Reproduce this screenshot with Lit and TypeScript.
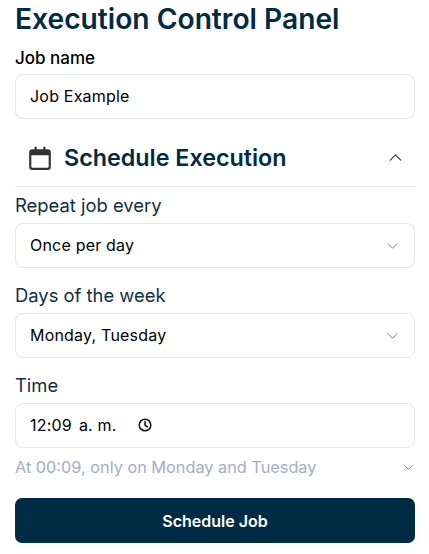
import { LitElement, html, css } from "lit";
import { customElement } from "lit/decorators.js";

const chevron = (cls: string) => html`<svg class=${cls} viewBox="0 0 14 8" fill="none"><path d="M1 1l6 6 6-6" stroke="currentColor" stroke-width="1.2" stroke-linecap="round" stroke-linejoin="round"/></svg>`;

@customElement("app-root")
export class AppRoot extends LitElement {
  static styles = css`
    :host { display: block; width: 429px; height: 554px; background: #fff; overflow: hidden; font-family: Inter, "Open Sans", sans-serif; color: #000; }
    .page { display: flex; flex-direction: column; padding: 0 14px 0 15px; }
    h1 { margin: 0; height: 38px; line-height: 38px; font-size: 28.2px; font-weight: 600; color: #012b44; white-space: nowrap; }
    .job-label { margin-top: 10px; height: 20px; line-height: 20px; font-size: 17px; font-weight: 500; }
    .field { box-sizing: border-box; height: 45px; margin-top: 4px; border: 1px solid #e5e7eb; border-radius: 8px; display: flex; align-items: center; padding: 0 14px 2px; font-size: 16px; letter-spacing: 0.2px; background: #fff; }
    .field.first { margin-top: 6px; }
    .select { justify-content: space-between; padding-right: 16px; }
    .chev { width: 11px; height: 6px; color: #707070; display: block; margin-top: 3px; }
    .section { box-sizing: border-box; height: 69px; margin-top: -1px; display: flex; align-items: center; padding: 11px 13px 0 12px; border-bottom: 1px solid #e2e8f0; }
    .cal { width: 26px; height: 26px; display: block; flex: none; }
    h2 { margin: 0 0 0 11px; flex: 1; font-size: 23.3px; font-weight: 600; color: #012b44; white-space: nowrap; }
    .up { width: 13px; height: 7px; color: #333; display: block; transform: rotate(180deg); }
    .label { height: 27px; line-height: 27px; font-size: 18.4px; color: #0f2f45; white-space: nowrap; }
    .label.top { margin-top: 5px; }
    .label.next { margin-top: 14px; }
    .time { gap: 7px; padding-left: 14px; }
    .clock { width: 14px; height: 14px; display: block; margin-left: 14px; }
    .hint-row { display: flex; align-items: center; justify-content: space-between; height: 20px; margin-top: 9px; padding-right: 2px; font-size: 16.3px; color: #a3aec4; }
    .hint-chev { width: 9px; height: 5px; color: #4a5568; display: block; }
    button { box-sizing: border-box; height: 45px; margin-top: 21px; border: 0; border-radius: 7px; background: #012b44; color: #fff; font: 600 16px Inter, "Open Sans", sans-serif; }
  `;

  render() {
    return html`<div class="page">
      <h1>Execution Control Panel</h1>
      <div class="job-label">Job name</div>
      <div class="field first">Job Example</div>
      <div class="section">
        <svg class="cal" viewBox="0 0 24 24"><path fill="#333" d="M7 1.5h2V4h6V1.5h2V4h2a3 3 0 0 1 3 3v13a3 3 0 0 1-3 3H5a3 3 0 0 1-3-3V7a3 3 0 0 1 3-3h2zM4 9.5V20a1 1 0 0 0 1 1h14a1 1 0 0 0 1-1V9.5z"/></svg>
        <h2>Schedule Execution</h2>
        ${chevron("up")}
      </div>
      <div class="label top">Repeat job every</div>
      <div class="field select"><span>Once per day</span>${chevron("chev")}</div>
      <div class="label next">Days of the week</div>
      <div class="field select"><span>Monday, Tuesday</span>${chevron("chev")}</div>
      <div class="label next">Time</div>
      <div class="field time"><span>12:09</span><span>a. m.</span>
        <svg class="clock" viewBox="0 0 14 14" fill="none" stroke="#111" stroke-width="1.5"><circle cx="7" cy="7" r="5.8"/><path d="M7 3.6V7l2.4 1.8" stroke-linecap="round"/></svg>
      </div>
      <div class="hint-row"><span>At 00:09, only on Monday and Tuesday</span>${chevron("hint-chev")}</div>
      <button>Schedule Job</button>
    </div>`;
  }
}
